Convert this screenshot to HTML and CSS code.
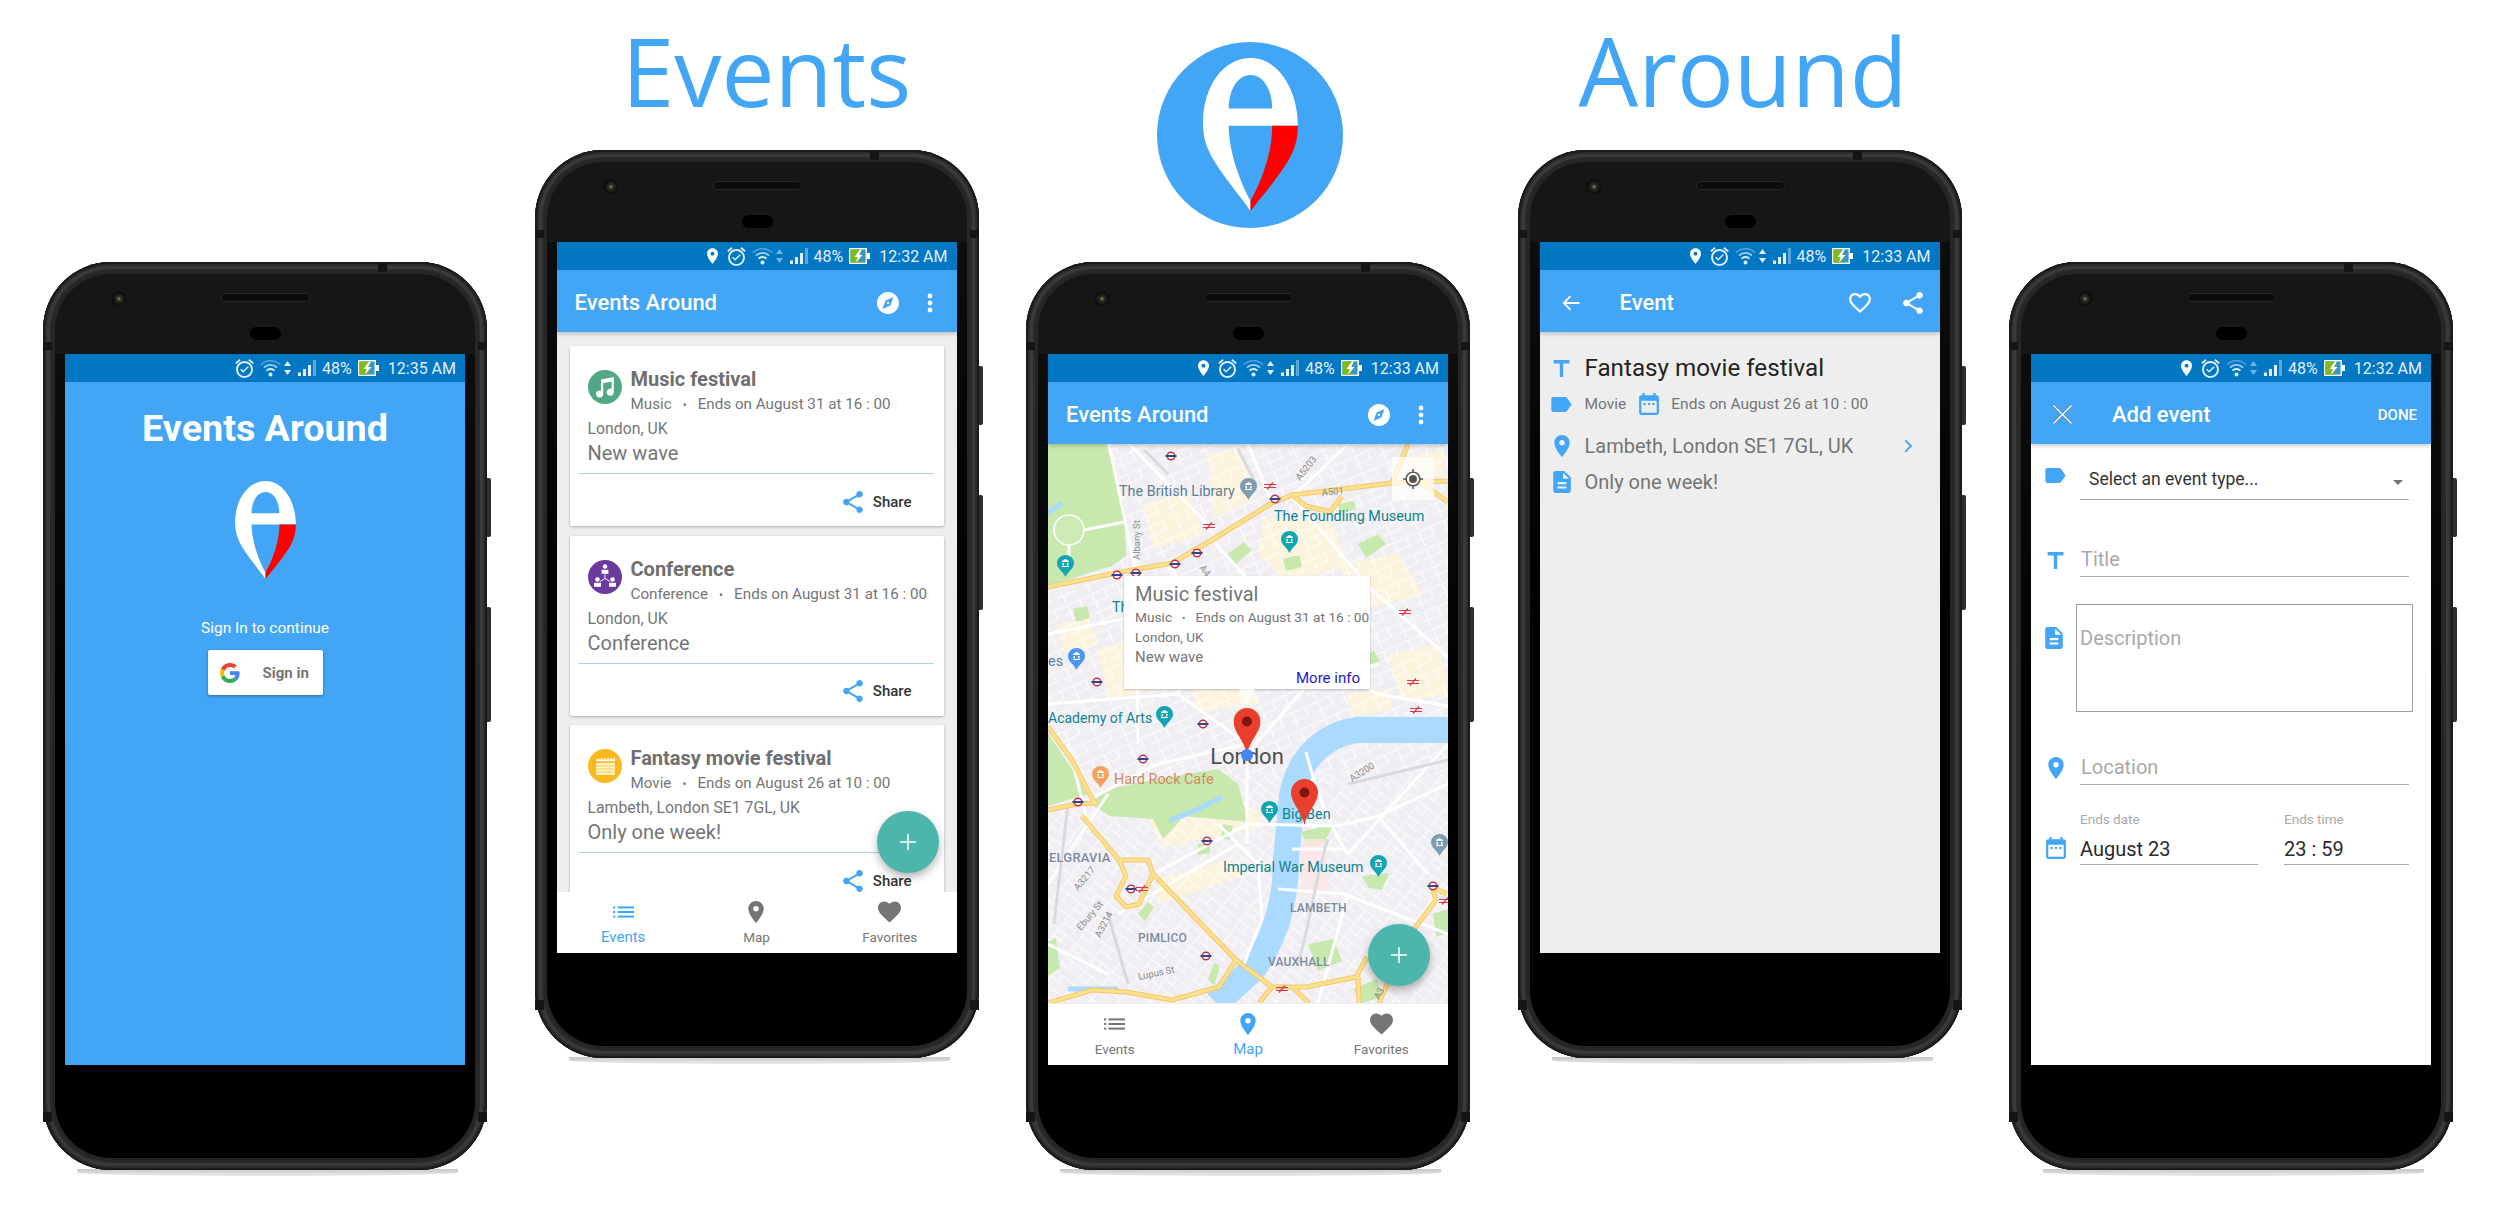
FILE: index.html
```html
<!DOCTYPE html>
<html lang="en">
<head>
<meta charset="utf-8">
<title>Events Around</title>
<link rel="stylesheet" href="styles.css">
</head>
<body>
<svg class="sprite" aria-hidden="true">
  <defs>
    <symbol id="i-pin" viewBox="5 2 14 20"><path d="M12 2C8.13 2 5 5.13 5 9c0 5.25 7 13 7 13s7-7.75 7-13c0-3.87-3.13-7-7-7zm0 9.5a2.5 2.5 0 1 1 0-5 2.5 2.5 0 0 1 0 5z"/></symbol>
    <symbol id="i-alarm" viewBox="2 1.8 20 20.4"><path d="M7.88 3.39L6.6 1.86 2 5.71l1.29 1.53 4.59-3.85zM22 5.72l-4.6-3.86-1.29 1.53 4.6 3.86L22 5.72zM12 4c-4.97 0-9 4.03-9 9s4.02 9 9 9c4.97 0 9-4.03 9-9s-4.03-9-9-9zm0 16c-3.87 0-7-3.13-7-7s3.13-7 7-7 7 3.13 7 7-3.13 7-7 7zm-1.46-5.47L8.41 12.4l-1.06 1.06 3.18 3.18 6-6-1.06-1.06-4.93 4.95z"/></symbol>
    <symbol id="i-wifi" viewBox="0 0 21 17"><circle cx="10.5" cy="14.5" r="2"/><path class="st" d="M6.6 10.6a5.5 5.5 0 0 1 7.8 0"/><path class="st" d="M4 7.6a9.2 9.2 0 0 1 13 0" opacity=".75"/><path class="st" d="M1 4.6a13.4 13.4 0 0 1 19 0" opacity=".35"/></symbol>
    <symbol id="i-arrows" viewBox="0 0 7 14"><path d="M3.5 0L7 5H0z"/><path d="M3.5 14L0 9h7z"/></symbol>
    <symbol id="i-arrows-dim" viewBox="0 0 7 14"><path d="M3.5 0L7 5H0z" opacity=".5"/><path d="M3.5 14L0 9h7z" opacity=".5"/></symbol>
    <symbol id="i-signal" viewBox="0 0 18 16"><rect x="0" y="12.5" width="3" height="3.5"/><rect x="5" y="9" width="3" height="7"/><rect x="10" y="5" width="3" height="11"/><rect x="15" y="0" width="3" height="16" opacity=".4"/></symbol>
    <symbol id="i-battery" viewBox="0 0 21 16"><path fill="#fff" d="M0 0h18v5h3v6h-3v5H0zM1.5 1.5v13h15v-13z"/><path fill="#7fbb1c" d="M1.5 1.5h9v13h-9z"/><path fill="#dff2b0" d="M10.5 1.5h6v13h-6z" opacity=".25"/><path fill="#fff" d="M11 1.5L5.5 9h3.2L7 14.5 13.5 7h-3.4L12.8 1.5z"/></symbol>
    <symbol id="i-compass" viewBox="2 2 20 20"><path fill-rule="evenodd" d="M12 2C6.48 2 2 6.48 2 12s4.48 10 10 10 10-4.48 10-10S17.52 2 12 2zm2.19 12.19L7 17.4l2.81-7.59L17 6.6l-2.81 7.59zM12 10.9a1.1 1.1 0 1 1 0 2.2 1.1 1.1 0 0 1 0-2.2z"/></symbol>
    <symbol id="i-more" viewBox="0 0 6 20"><circle cx="3" cy="3" r="2.4"/><circle cx="3" cy="10" r="2.4"/><circle cx="3" cy="17" r="2.4"/></symbol>
    <symbol id="i-share" viewBox="3 2 18 20"><path d="M18 16.08c-.76 0-1.44.3-1.96.77L8.91 12.7c.05-.23.09-.46.09-.7s-.04-.47-.09-.7l7.05-4.11c.54.5 1.25.81 2.04.81 1.66 0 3-1.34 3-3s-1.34-3-3-3-3 1.34-3 3c0 .24.04.47.09.7L8.04 9.81C7.5 9.31 6.79 9 6 9c-1.66 0-3 1.34-3 3s1.34 3 3 3c.79 0 1.5-.31 2.04-.81l7.12 4.16c-.05.21-.08.43-.08.65 0 1.61 1.31 2.92 2.92 2.92 1.61 0 2.92-1.31 2.92-2.92s-1.31-2.92-2.92-2.92z"/></symbol>
    <symbol id="i-list" viewBox="0 0 21 12"><circle cx="1.2" cy="1.4" r="1.2"/><circle cx="1.2" cy="6" r="1.2"/><circle cx="1.2" cy="10.6" r="1.2"/><rect x="4.5" y="0.4" width="16.5" height="2"/><rect x="4.5" y="5" width="16.5" height="2"/><rect x="4.5" y="9.6" width="16.5" height="2"/></symbol>
    <symbol id="i-heart" viewBox="2 3 20 18.35"><path d="M12 21.35l-1.45-1.32C5.4 15.36 2 12.28 2 8.5 2 5.42 4.42 3 7.5 3c1.74 0 3.41.81 4.5 2.09C13.09 3.81 14.76 3 16.5 3 19.58 3 22 5.42 22 8.5c0 3.78-3.4 6.86-8.55 11.54L12 21.35z"/></symbol>
    <symbol id="i-heart-o" viewBox="2 3 20 18.35"><path d="M16.5 3c-1.74 0-3.41.81-4.5 2.09C10.91 3.81 9.24 3 7.5 3 4.42 3 2 5.42 2 8.5c0 3.78 3.4 6.86 8.55 11.54L12 21.35l1.45-1.32C18.6 15.36 22 12.28 22 8.5 22 5.42 19.58 3 16.5 3zm-4.4 15.55l-.1.1-.1-.1C7.14 14.24 4 11.39 4 8.5 4 6.5 5.5 5 7.5 5c1.54 0 3.04.99 3.57 2.36h1.87C13.46 5.99 14.96 5 16.5 5c2 0 3.5 1.5 3.5 3.5 0 2.89-3.14 5.74-7.9 10.05z"/></symbol>
    <symbol id="i-back" viewBox="0 0 18 16"><path class="st" d="M17.5 8H2M8.5 1.2L1.7 8l6.8 6.8"/></symbol>
    <symbol id="i-close" viewBox="0 0 21 21"><path class="st-shadow" d="M1.5 1.5l18 18M19.5 1.5l-18 18"/><path class="st-thin" d="M1.5 1.5l18 18M19.5 1.5l-18 18"/></symbol>
    <symbol id="i-title" viewBox="5 4 14 15"><path d="M5 4v3h5.5v12h3V7H19V4z"/></symbol>
    <symbol id="i-tag" viewBox="3 5 19 14"><path d="M17.63 5.84C17.27 5.33 16.67 5 16 5L5 5.01C3.9 5.01 3 5.9 3 7v10c0 1.1.9 1.99 2 1.99L16 19c.67 0 1.27-.33 1.63-.84L22 12l-4.37-6.16z"/></symbol>
    <symbol id="i-cal" viewBox="3 2 18 20"><path d="M9 11H7v2h2v-2zm4 0h-2v2h2v-2zm4 0h-2v2h2v-2zm2-7h-1V2h-2v2H8V2H6v2H5c-1.11 0-1.99.9-1.99 2L3 20c0 1.1.89 2 2 2h14c1.1 0 2-.9 2-2V6c0-1.1-.9-2-2-2zm0 16H5V9h14v11z"/></symbol>
    <symbol id="i-doc" viewBox="4 2 16 20"><path d="M14 2H6c-1.1 0-1.99.9-1.99 2L4 20c0 1.1.89 2 1.99 2H18c1.1 0 2-.9 2-2V8l-6-6zm2 16H8v-2h8v2zm0-4H8v-2h8v2zm-3-5V3.5L18.5 9H13z"/></symbol>
    <symbol id="i-chev" viewBox="0 0 9 14"><path class="st" d="M1.2 1.2L7 7l-5.8 5.8"/></symbol>
    <symbol id="i-plus" viewBox="0 0 16 16"><path d="M7.2 0h1.6v7.2H16v1.6H8.800V16H7.200V8.800H0V7.200h7.200z"/></symbol>
    <symbol id="i-music" viewBox="0 0 34 34"><circle cx="17" cy="17" r="17" fill="#52a883"/><path fill="#fff" d="M13 9.500v11.200a3.600 3.600 0 1 0 2.200 3.300V13.300l8.400-1.700v7.300a3.600 3.600 0 1 0 2.200 3.300V7z"/></symbol>
    <symbol id="i-conf" viewBox="0 0 34 34"><circle cx="17" cy="17" r="17" fill="#6a3a9c"/><g fill="#fff"><circle cx="17" cy="6.500" r="2.300"/><path d="M13.600 9.800h6.800v4h-6.800z"/><circle cx="9.500" cy="19.500" r="2.300"/><path d="M6 22.800h7v4H6z"/><circle cx="24.500" cy="19.500" r="2.300"/><path d="M21 22.800h7v4h-7z"/></g><path d="M17 14v4.500M17 18.500l-5 3M17 18.500l5 3" stroke="#fff" stroke-width=".9" fill="none"/></symbol>
    <symbol id="i-movie" viewBox="0 0 34 34"><circle cx="17" cy="17" r="17" fill="#fbb91f"/><path fill="#fff3c4" d="M8 14h19v12H8z"/><path fill="#fff" d="M8 9.500l19-.500v3.500H8z"/><path stroke="#fbb91f" stroke-width="1.400" stroke-dasharray="1.600 1.600" d="M8 9.800h19M8 13h19"/><path stroke="#fbc94f" stroke-width=".9" d="M8 17h19M8 20h19M8 23h19"/></symbol>
    <symbol id="i-g" viewBox="0 0 48 48"><path fill="#EA4335" d="M24 9.500c3.540 0 6.710 1.220 9.210 3.600l6.850-6.850C35.900 2.380 30.470 0 24 0 14.620 0 6.510 5.380 2.560 13.220l7.980 6.190C12.430 13.720 17.740 9.500 24 9.500z"/><path fill="#4285F4" d="M46.980 24.550c0-1.570-.15-3.090-.38-4.550H24v9.020h12.940c-.58 2.960-2.260 5.480-4.780 7.180l7.730 6c4.510-4.180 7.090-10.360 7.090-17.650z"/><path fill="#FBBC05" d="M10.530 28.590c-.48-1.450-.76-2.990-.76-4.590s.27-3.140.76-4.590l-7.980-6.190C.92 16.460 0 20.120 0 24c0 3.880.92 7.540 2.560 10.780l7.970-6.190z"/><path fill="#34A853" d="M24 48c6.480 0 11.930-2.130 15.890-5.810l-7.730-6c-2.150 1.450-4.920 2.300-8.160 2.300-6.260 0-11.570-4.220-13.470-9.910l-7.980 6.190C6.510 42.620 14.620 48 24 48z"/></symbol>
    <symbol id="i-logo" viewBox="548 117 284 458"><path fill="#fff" fill-rule="evenodd" d="M690 117C775 117 832 215 832 320H625C625 400 660 490 690 545V575C640 505 590 450 565 395 552 365 548 340 548 310 548 200 610 117 690 117ZM625 268H755C755 215 730 168 690 168 650 168 625 215 625 268Z"/><path fill="#f00" d="M755 320H832C832 370 815 410 790 445 760 490 725 530 690 575V545C725 480 755 400 755 320Z"/></symbol>
    <symbol id="m-ug" viewBox="0 0 12 10"><circle cx="6" cy="5" r="3.800" fill="#fff" stroke="#c0344a" stroke-width="1.500"/><rect x="0.500" y="4" width="11" height="2" fill="#34418f"/></symbol>
    <symbol id="m-rail" viewBox="0 0 12 8"><path d="M0 2.500h12M0 5.500h12M3 7.500l6-7" stroke="#d6394a" stroke-width="1.200" fill="none"/></symbol>
    <symbol id="m-poi" viewBox="0 0 17 22"><path d="M8.500 22C6 16.500 0 13.500 0 8a8.500 8 0 0 1 17 0c0 5.500-6 8.500-8.500 14z"/><path d="M5 6l3.500-2L12 6v1H5zM5.500 8h1.500v2.500h-1.500zM10 8h1.500v2.500H10zM5 11h7v1H5z" fill="#fff"/></symbol>
    <symbol id="m-marker" viewBox="0 0 27 46"><path fill="#ea3f2c" d="M13.500 46C11 33 0 24 0 13.500a13.500 13.500 0 0 1 27 0C27 24 16 33 13.500 46z"/><circle cx="13.500" cy="13.500" r="5" fill="#7d1710"/></symbol>
    <pattern id="streets-a" width="27" height="19" patternUnits="userSpaceOnUse" patternTransform="rotate(-24)"><path d="M0 3h27M6 3v16M19 3v9M0 12h20" stroke="#fff" stroke-width="1.200" fill="none"/></pattern>
    <pattern id="streets-b" width="23" height="17" patternUnits="userSpaceOnUse" patternTransform="rotate(38)"><path d="M0 2h23M8 2v15M17 2v8M8 10h15" stroke="#fff" stroke-width="1" fill="none"/></pattern>
    <path id="yellow-roads" d="M0 143L68 129 124 119 164 96 224 59 244 51 344 39 400 37M360 0L344 39M372 38L400 58M244 51L258 62 282 68 294 52M0 283L24 316 41 349 48 361M0 366L28 360 48 359M34 372L71 416 100 416 105 430 91 460 78 463 68 452 78 432 71 416M105 430L188 516 224 543 258 543 308 533 319 513M0 559L44 546 78 548 124 556 171 543 188 516M224 543L211 559M244 543L261 559M310 533L311 559M384 443L388 456 358 496 331 559M384 443L399 450"/>
    <clipPath id="map-clip"><rect width="400" height="559"/></clipPath>
  </defs>
</svg>

<main class="stage">

  <section class="col col-low">
    <article class="phone">
      <span class="camera"></span><span class="speaker"></span><span class="sensor"></span>
      <span class="btn btn-power"></span><span class="btn btn-volume"></span>
      <div class="bezel">
        <div class="screen screen-blue">
          <div class="status">
            <svg class="s-alarm"><use href="#i-alarm"/></svg>
            <svg class="s-wifi"><use href="#i-wifi"/></svg>
            <svg class="s-arrows"><use href="#i-arrows"/></svg>
            <svg class="s-signal"><use href="#i-signal"/></svg>
            <span class="s-pct">48%</span>
            <svg class="s-batt"><use href="#i-battery"/></svg>
            <span class="s-time">12:35 AM</span>
          </div>
          <div class="splash">
            <h2 class="splash-title">Events Around</h2>
            <svg class="splash-logo"><use href="#i-logo"/></svg>
            <p class="splash-text">Sign In to continue</p>
            <div class="gbtn">
              <svg class="gbtn-icon"><use href="#i-g"/></svg>
              <span class="gbtn-label">Sign in</span>
            </div>
          </div>
        </div>
      </div>
    </article>
    <div class="floor"></div>
  </section>

  <section class="col col-high">
    <h1 class="hero hero-events">Events</h1>
    <article class="phone">
      <span class="camera"></span><span class="speaker"></span><span class="sensor"></span>
      <span class="btn btn-power"></span><span class="btn btn-volume"></span>
      <div class="bezel">
        <div class="screen">
          <div class="status">
            <svg class="s-pin"><use href="#i-pin"/></svg>
            <svg class="s-alarm"><use href="#i-alarm"/></svg>
            <svg class="s-wifi"><use href="#i-wifi"/></svg>
            <svg class="s-arrows"><use href="#i-arrows-dim"/></svg>
            <svg class="s-signal"><use href="#i-signal"/></svg>
            <span class="s-pct">48%</span>
            <svg class="s-batt"><use href="#i-battery"/></svg>
            <span class="s-time">12:32 AM</span>
          </div>
          <header class="appbar">
            <span class="appbar-title appbar-brand">Events Around</span>
            <svg class="ab-compass"><use href="#i-compass"/></svg>
            <svg class="ab-more"><use href="#i-more"/></svg>
          </header>
          <div class="cards">
            <div class="card">
              <div class="card-head">
                <svg class="avatar"><use href="#i-music"/></svg>
                <div>
                  <div class="card-title">Music festival</div>
                  <div class="card-sub">Music<span class="dot">•</span>Ends on August 31 at 16 : 00</div>
                </div>
              </div>
              <div class="card-loc">London, UK</div>
              <div class="card-desc">New wave</div>
              <div class="card-foot"><svg class="share-icon"><use href="#i-share"/></svg><span class="share-label">Share</span></div>
            </div>
            <div class="card">
              <div class="card-head">
                <svg class="avatar"><use href="#i-conf"/></svg>
                <div>
                  <div class="card-title">Conference</div>
                  <div class="card-sub">Conference<span class="dot">•</span>Ends on August 31 at 16 : 00</div>
                </div>
              </div>
              <div class="card-loc">London, UK</div>
              <div class="card-desc">Conference</div>
              <div class="card-foot"><svg class="share-icon"><use href="#i-share"/></svg><span class="share-label">Share</span></div>
            </div>
            <div class="card">
              <div class="card-head">
                <svg class="avatar"><use href="#i-movie"/></svg>
                <div>
                  <div class="card-title">Fantasy movie festival</div>
                  <div class="card-sub">Movie<span class="dot">•</span>Ends on August 26 at 10 : 00</div>
                </div>
              </div>
              <div class="card-loc">Lambeth, London SE1 7GL, UK</div>
              <div class="card-desc">Only one week!</div>
              <div class="card-foot"><svg class="share-icon"><use href="#i-share"/></svg><span class="share-label">Share</span></div>
            </div>
            <button class="fab fab-list"><svg class="fab-plus"><use href="#i-plus"/></svg></button>
          </div>
          <nav class="tabs">
            <div class="tab tab-on"><svg class="tab-list"><use href="#i-list"/></svg><span class="tab-label">Events</span></div>
            <div class="tab"><svg class="tab-pin"><use href="#i-pin"/></svg><span class="tab-label">Map</span></div>
            <div class="tab"><svg class="tab-heart"><use href="#i-heart"/></svg><span class="tab-label">Favorites</span></div>
          </nav>
        </div>
      </div>
    </article>
    <div class="floor"></div>
  </section>

  <section class="col col-low col-logo">
    <div class="logo-wrap">
      <div class="logo-disc"><svg class="logo-mark"><use href="#i-logo"/></svg></div>
    </div>
    <article class="phone">
      <span class="camera"></span><span class="speaker"></span><span class="sensor"></span>
      <span class="btn btn-power"></span><span class="btn btn-volume"></span>
      <div class="bezel">
        <div class="screen">
          <div class="status">
            <svg class="s-pin"><use href="#i-pin"/></svg>
            <svg class="s-alarm"><use href="#i-alarm"/></svg>
            <svg class="s-wifi"><use href="#i-wifi"/></svg>
            <svg class="s-arrows"><use href="#i-arrows"/></svg>
            <svg class="s-signal"><use href="#i-signal"/></svg>
            <span class="s-pct">48%</span>
            <svg class="s-batt"><use href="#i-battery"/></svg>
            <span class="s-time">12:33 AM</span>
          </div>
          <header class="appbar">
            <span class="appbar-title appbar-brand">Events Around</span>
            <svg class="ab-compass"><use href="#i-compass"/></svg>
            <svg class="ab-more"><use href="#i-more"/></svg>
          </header>
          <div class="map">
            <svg class="map-svg" viewBox="0 0 400 559">
              <g clip-path="url(#map-clip)">
                <rect class="m-land" width="400" height="559"/>
                <path class="m-beige" d="M215 72l70 8 15 40-60 20-30-30zM110 150l60-10 30 45-70 20zM210 170l80-10 30 40-70 30zM50 205l70-15 20 50-80 15zM140 225l60-5 10 40-60 8zM290 120l60-10 25 40-60 15zM340 210l50-10 10 50-45 8zM300 250l40-5 5 20-40 8zM345 15l50-8v25l-48 8zM160 10l35-5 10 50-40 20zM95 60l45-10 15 40-50 15zM100 375l110-12 5 20-100 20zM110 435l70-20 20 15-90 30zM10 180l30-5 10 25-35 10z"/>
                <rect class="m-streets" width="400" height="330" fill="url(#streets-a)"/>
                <rect class="m-streets" y="330" width="400" height="229" fill="url(#streets-b)"/>
                <path class="m-park" d="M0 0H58L76 60 78 112 64 122 0 142zM0 289L40 350 0 362zM42 360L60 345 110 335 170 325 190 340 200 378 135 372 125 385 115 395 105 375 62 372zM314 432L341 429 334 446 321 444zM252 388L286 380 276 398 262 403zM260 500l26-5 8 22-24 10zM0 498l8-4 4 30-12 8zM385 470l15-5v25l-12 2zM305 545l24-10 5 18-20 6zM175 380l10 2-3 14-9-2zM150 400l12 0 0 9-12 2zM90 470l10-12 6 5-9 14zM160 535l6-16 6 3-6 20zM310 100l20-10 8 10-20 14zM290 60l16-3 2 8-16 4zM180 110l16-12 8 8-16 14zM235 115l16-4 3 12-16 4zM25 165l14-3 3 12-14 4zM275 200l18-10 8 12-16 10zM310 215l16-8 6 10-16 8z"/>
                <path class="m-pink" d="M252 395h24l6 50-28 8z"/>
                <path class="m-river" d="M400 286H308C272 292 250 318 244 352L238 416C238 450 230 490 205 525L168 559"/>
                <path class="m-water-sm" d="M121 376C140 372 155 362 174 353"/>
                <path class="m-water-sm" d="M0 69L14 59M20 545H70"/>
                <circle class="m-circle" cx="21" cy="86" r="15"/>
                <g class="m-white-lg">
                  <path d="M61 0L88 129 90 300M81 0L158 79M36 86L76 78M21 101V122M244 53L324 146 400 213M120 160L210 190 330 250 400 262M0 190L125 165M0 260L130 250 199 300M199 300V400M40 356L110 320 199 300M199 310L260 240 330 220M258 308C275 372 290 395 300 410M0 440L60 350M105 430L200 380 290 382 330 372 400 340M300 410L400 300M230 445L296 450 400 490M170 380L210 420 214 475 196 520M330 372L380 430M244 405H298M0 500L60 530M70 470L190 400M300 450L270 559M40 380L20 300M300 0L244 53M200 0L224 59M124 119L145 200 130 250M164 96L240 180"/>
                </g>
                <g class="m-gray-lg">
                  <path d="M96 6L120 30M190 5L208 40M300 340L400 316M280 395C268 430 262 480 250 520M60 470L80 540M20 360L6 480"/>
                </g>
                <use href="#yellow-roads" class="m-road-out"/>
                <use href="#yellow-roads" class="m-road-in"/>

                <text class="ml ml-slate" x="71" y="52">The British Library</text>
                <text class="ml ml-teal" x="226" y="77">The Foundling Museum</text>
                <text class="ml ml-teal" x="64" y="168">Th</text>
                <text class="ml ml-blue" x="0" y="222">es</text>
                <text class="ml ml-teal ml-tight" x="0" y="279">Academy of Arts</text>
                <text class="ml ml-hard" x="66" y="340">Hard Rock Cafe</text>
                <text class="ml ml-teal" x="234" y="375">Big Ben</text>
                <text class="ml ml-teal" x="175" y="428">Imperial War Museum</text>
                <text class="ml-area" x="1" y="418">ELGRAVIA</text>
                <text class="ml-area ml-area-sm" x="242" y="468">LAMBETH</text>
                <text class="ml-area ml-area-sm" x="90" y="498">PIMLICO</text>
                <text class="ml-area ml-area-sm" x="220" y="522">VAUXHALL</text>
                <text class="ml-road" transform="translate(91 536) rotate(-12)">Lupus St</text>
                <text class="ml-road" transform="translate(274 52) rotate(-6)">A501</text>
                <text class="ml-road" transform="translate(252 37) rotate(-52)">A5203</text>
                <text class="ml-road" transform="translate(92 116) rotate(-90)">Albany St</text>
                <text class="ml-road" transform="translate(304 338) rotate(-32)">A3200</text>
                <text class="ml-road" transform="translate(30 447) rotate(-50)">A3217</text>
                <text class="ml-road" transform="translate(33 487) rotate(-50)">Ebury St</text>
                <text class="ml-road" transform="translate(52 494) rotate(-62)">A3214</text>
                <text class="ml-road" transform="translate(331 556) rotate(-60)">A3</text>
                <text class="ml-road" transform="translate(151 124) rotate(52)">A4</text>

                <g>
                  <use href="#m-ug" x="117" y="7" width="12" height="10"/><use href="#m-ug" x="221" y="50" width="12" height="10"/>
                  <use href="#m-ug" x="143" y="104" width="12" height="10"/><use href="#m-ug" x="121" y="115" width="12" height="10"/>
                  <use href="#m-ug" x="82" y="124" width="12" height="10"/><use href="#m-ug" x="63" y="126" width="12" height="10"/>
                  <use href="#m-ug" x="43" y="233" width="12" height="10"/><use href="#m-ug" x="149" y="275" width="12" height="10"/>
                  <use href="#m-ug" x="89" y="310" width="12" height="10"/><use href="#m-ug" x="24" y="353" width="12" height="10"/>
                  <use href="#m-ug" x="153" y="392" width="12" height="10"/><use href="#m-ug" x="77" y="440" width="12" height="10"/>
                  <use href="#m-ug" x="152" y="507" width="12" height="10"/><use href="#m-ug" x="379" y="437" width="12" height="10"/>
                  <use href="#m-rail" x="216" y="38" width="12" height="8"/><use href="#m-rail" x="155" y="78" width="12" height="8"/>
                  <use href="#m-rail" x="351" y="164" width="12" height="8"/><use href="#m-rail" x="359" y="234" width="12" height="8"/>
                  <use href="#m-rail" x="362" y="262" width="12" height="8"/><use href="#m-rail" x="88" y="441" width="12" height="8"/>
                  <use href="#m-rail" x="228" y="541" width="12" height="8"/><use href="#m-rail" x="391" y="453" width="12" height="8"/>
                  <use href="#m-poi" class="p-slate" x="192" y="34" width="17" height="22"/>
                  <use href="#m-poi" class="p-teal" x="233" y="87" width="17" height="22"/>
                  <use href="#m-poi" class="p-teal" x="9" y="111" width="17" height="22"/>
                  <use href="#m-poi" class="p-blue" x="20" y="204" width="17" height="22"/>
                  <use href="#m-poi" class="p-teal" x="108" y="262" width="17" height="22"/>
                  <use href="#m-poi" class="p-orange" x="44" y="322" width="17" height="22"/>
                  <use href="#m-poi" class="p-teal" x="213" y="357" width="17" height="22"/>
                  <use href="#m-poi" class="p-teal" x="322" y="411" width="17" height="22"/>
                  <use href="#m-poi" class="p-slate" x="383" y="390" width="17" height="22"/>
                </g>

                <text class="ml-city" x="199" y="320">London</text>
                <use href="#m-marker" x="185.500" y="264" width="27" height="46"/>
                <circle class="m-here" cx="199" cy="311" r="6"/>
                <use href="#m-marker" x="243" y="335" width="27" height="46"/>
              </g>
            </svg>
            <div class="locate"><svg viewBox="0 0 24 24" class="locate-icon"><circle cx="12" cy="12" r="7.500" fill="none" stroke="#555" stroke-width="1.600"/><circle cx="12" cy="12" r="4.300" fill="#555"/><path d="M12 1v4M12 19v4M1 12h4M19 12h4" stroke="#555" stroke-width="1.600"/></svg></div>
            <div class="bubble">
              <div class="b-title">Music festival</div>
              <div class="b-sub">Music<span class="dot dot-b">•</span>Ends on August 31 at 16 : 00</div>
              <div class="b-loc">London, UK</div>
              <div class="b-desc">New wave</div>
              <div class="b-more">More info</div>
            </div>
            <button class="fab fab-map"><svg class="fab-plus"><use href="#i-plus"/></svg></button>
          </div>
          <nav class="tabs">
            <div class="tab"><svg class="tab-list"><use href="#i-list"/></svg><span class="tab-label">Events</span></div>
            <div class="tab tab-on"><svg class="tab-pin"><use href="#i-pin"/></svg><span class="tab-label">Map</span></div>
            <div class="tab"><svg class="tab-heart"><use href="#i-heart"/></svg><span class="tab-label">Favorites</span></div>
          </nav>
        </div>
      </div>
    </article>
    <div class="floor"></div>
  </section>

  <section class="col col-high">
    <h1 class="hero hero-around">Around</h1>
    <article class="phone">
      <span class="camera"></span><span class="speaker"></span><span class="sensor"></span>
      <span class="btn btn-power"></span><span class="btn btn-volume"></span>
      <div class="bezel">
        <div class="screen screen-gray">
          <div class="status">
            <svg class="s-pin"><use href="#i-pin"/></svg>
            <svg class="s-alarm"><use href="#i-alarm"/></svg>
            <svg class="s-wifi"><use href="#i-wifi"/></svg>
            <svg class="s-arrows"><use href="#i-arrows"/></svg>
            <svg class="s-signal"><use href="#i-signal"/></svg>
            <span class="s-pct">48%</span>
            <svg class="s-batt"><use href="#i-battery"/></svg>
            <span class="s-time">12:33 AM</span>
          </div>
          <header class="appbar">
            <svg class="ab-back"><use href="#i-back"/></svg>
            <span class="appbar-title appbar-page">Event</span>
            <svg class="ab-heart"><use href="#i-heart-o"/></svg>
            <svg class="ab-share"><use href="#i-share"/></svg>
          </header>
          <div class="detail">
            <div class="d-row d-row-title">
              <span class="d-slot"><svg class="ic-title"><use href="#i-title"/></svg></span>
              <span class="d-title">Fantasy movie festival</span>
            </div>
            <div class="d-row d-row-meta">
              <span class="d-slot"><svg class="ic-tag"><use href="#i-tag"/></svg></span>
              <span class="d-meta">Movie</span>
              <svg class="ic-cal ic-cal-d"><use href="#i-cal"/></svg>
              <span class="d-meta">Ends on August 26 at 10 : 00</span>
            </div>
            <div class="d-row d-row-loc">
              <span class="d-slot"><svg class="ic-pin"><use href="#i-pin"/></svg></span>
              <span class="d-text">Lambeth, London SE1 7GL, UK</span>
              <svg class="ic-chev"><use href="#i-chev"/></svg>
            </div>
            <div class="d-row d-row-desc">
              <span class="d-slot"><svg class="ic-doc"><use href="#i-doc"/></svg></span>
              <span class="d-text">Only one week!</span>
            </div>
          </div>
        </div>
      </div>
    </article>
    <div class="floor"></div>
  </section>

  <section class="col col-low">
    <article class="phone">
      <span class="camera"></span><span class="speaker"></span><span class="sensor"></span>
      <span class="btn btn-power"></span><span class="btn btn-volume"></span>
      <div class="bezel">
        <div class="screen screen-white">
          <div class="status">
            <svg class="s-pin"><use href="#i-pin"/></svg>
            <svg class="s-alarm"><use href="#i-alarm"/></svg>
            <svg class="s-wifi"><use href="#i-wifi"/></svg>
            <svg class="s-arrows"><use href="#i-arrows-dim"/></svg>
            <svg class="s-signal"><use href="#i-signal"/></svg>
            <span class="s-pct">48%</span>
            <svg class="s-batt"><use href="#i-battery"/></svg>
            <span class="s-time">12:32 AM</span>
          </div>
          <header class="appbar">
            <svg class="ab-close"><use href="#i-close"/></svg>
            <span class="appbar-title appbar-form">Add event</span>
            <span class="ab-done">DONE</span>
          </header>
          <form class="form">
            <div class="f-row f-type">
              <span class="f-slot"><svg class="ic-tag"><use href="#i-tag"/></svg></span>
              <div class="f-field f-select"><span>Select an event type...</span><span class="caret"></span></div>
            </div>
            <div class="f-row f-title">
              <span class="f-slot"><svg class="ic-title"><use href="#i-title"/></svg></span>
              <div class="f-field f-hint">Title</div>
            </div>
            <div class="f-row f-desc">
              <span class="f-slot f-slot-narrow"><svg class="ic-doc"><use href="#i-doc"/></svg></span>
              <div class="f-area">Description</div>
            </div>
            <div class="f-row f-loc">
              <span class="f-slot"><svg class="ic-pin"><use href="#i-pin"/></svg></span>
              <div class="f-field f-hint">Location</div>
            </div>
            <div class="f-row f-dates">
              <span class="f-slot"><svg class="ic-cal"><use href="#i-cal"/></svg></span>
              <div class="f-date">
                <div class="f-small">Ends date</div>
                <div class="f-value">August 23</div>
              </div>
              <div class="f-date f-time">
                <div class="f-small">Ends time</div>
                <div class="f-value">23 : 59</div>
              </div>
            </div>
          </form>
        </div>
      </div>
    </article>
    <div class="floor"></div>
  </section>

</main>
</body>
</html>
```

FILE: styles.css
```css
* { box-sizing: border-box; }
html, body { margin: 0; padding: 0; background: #fff; }
body { width: 2500px; height: 1214px; overflow: hidden; font-family: Roboto, "Liberation Sans", sans-serif; color: #757575; }
svg { display: block; fill: currentColor; overflow: visible; }
.sprite { position: absolute; width: 0; height: 0; }
.st { fill: none; stroke: currentColor; stroke-width: 1.8; }
.st-thin { fill: none; stroke: #fff; stroke-width: 1.4; }
.st-shadow { fill: none; stroke: #5f7f9c; stroke-width: 2.6; }

.stage { display: flex; gap: 47.5px; padding-left: 43px; }
.col { width: 444px; flex: none; display: flex; flex-direction: column; }
.col-low { padding-top: 262px; }
.col-logo { padding-top: 0; }

.hero { margin: 0; height: 150px; padding-top: 23px; font: 400 94.5px/96px "Open Sans", sans-serif; color: #42a5f5; text-align: center; }
.hero-events { padding-left: 20px; }
.hero-around { padding-left: 7px; }

.logo-wrap { height: 262px; padding-top: 42px; display: flex; justify-content: center; padding-left: 4px; }
.logo-disc { width: 186px; height: 186px; border-radius: 50%; background: #42a5f5; display: flex; justify-content: center; padding-top: 16px; }
.logo-mark { width: 95px; height: 153px; }

/* phone frame */
.phone { position: relative; width: 444px; height: 908px; padding: 12px; border-radius: 68px; background: #262626; box-shadow: inset 0 0 0 2px #1a1a1a, inset 0 0 0 4px #2c2c2c, inset 0 0 0 7px #3a3a3a, inset 0 0 0 9px #2a2a2a; }
.phone::after { content: ""; position: absolute; inset: 0; pointer-events: none; background-repeat: no-repeat; background-image: linear-gradient(#151515, #151515), linear-gradient(#151515, #151515), linear-gradient(#151515, #151515), linear-gradient(#151515, #151515), linear-gradient(#151515, #151515); background-size: 9px 10px, 9px 8px, 9px 8px, 9px 10px, 9px 10px; background-position: 335px 0, 0 80px, 435px 80px, 0 850px, 435px 850px; }
.bezel { height: 884px; padding: 80px 10px 93px; border-radius: 56px; background: linear-gradient(#161616 0, #161616 80px, #0d0d0d 80px, #000 480px); }
.camera { position: absolute; left: 68px; top: 28px; width: 16px; height: 16px; border-radius: 50%; background: radial-gradient(circle at 50% 55%, #8a8a3a 0, #2c2c2c 20%, #0c0c0c 55%, #2a2a2a 100%); }
.speaker { position: absolute; left: 178px; top: 31px; width: 89px; height: 9px; border-radius: 5px; background: #0c0c0c; box-shadow: inset 0 0 0 1px #262626; }
.sensor { position: absolute; left: 207px; top: 65px; width: 31px; height: 13px; border-radius: 7px; background: #000; }
.btn { position: absolute; right: -4px; width: 4px; background: #2e2e2e; border-radius: 0 2px 2px 0; }
.btn-power { top: 216px; height: 59px; }
.btn-volume { top: 345px; height: 115px; }
.floor { height: 7px; margin: -1px 29px 0 34px; background: linear-gradient(#c6c6c6, #ececec); border-radius: 0 0 50% 50%; }

.screen { width: 400px; height: 711px; display: flex; flex-direction: column; position: relative; background: #eee; overflow: hidden; }
.screen-blue { background: #42a5f5; }
.screen-gray { background: #eee; }
.screen-white { background: #fff; }

/* status bar */
.status { height: 28px; flex: none; display: flex; align-items: center; justify-content: flex-end; padding-right: 9px; background: #0277c4; color: #e3eff8; }
.status svg { flex: none; }
.s-pin { width: 11px; height: 16px; margin-right: 9px; color: #fff; }
.s-alarm { width: 19px; height: 19px; margin-right: 6px; }
.s-wifi { width: 21px; height: 17px; margin-right: 3px; }
.s-arrows { width: 7px; height: 14px; margin-right: 7px; }
.s-signal { width: 18px; height: 16px; margin-right: 6px; }
.s-pct { font-size: 16px; margin-right: 6px; }
.s-batt { width: 21px; height: 16px; margin-right: 9px; }
.s-time { font-size: 16px; }

/* app bar */
.appbar { height: 62px; flex: none; display: flex; align-items: center; padding-top: 3px; background: #42a5f5; color: #fff; position: relative; z-index: 2; box-shadow: 0 2px 4px rgba(0,0,0,.2); }
.appbar-title { font-size: 22px; font-weight: 500; white-space: nowrap; }
.appbar-brand { margin-left: 18px; margin-right: auto; }
.ab-compass { width: 22px; height: 22px; margin-right: 28px; }
.ab-more { width: 6px; height: 20px; margin-right: 24px; }
.ab-back { width: 18px; height: 16px; margin-left: 22px; }
.appbar-page { margin-left: 40px; margin-right: auto; }
.ab-heart { width: 22px; height: 20px; margin-right: 32px; }
.ab-share { width: 20px; height: 22px; margin-right: 17px; }
.ab-close { width: 21px; height: 21px; margin-left: 21px; }
.appbar-form { margin-left: 39px; margin-right: auto; }
.ab-done { font-size: 15px; font-weight: 500; margin-right: 14px; }

/* event list */
.cards { flex: 1; min-height: 0; position: relative; overflow: hidden; padding: 14px 13px 0; background: #eee; }
.card { height: 180px; margin-bottom: 9.500px; padding: 21px 0 0 18px; background: #fff; border-radius: 2px; box-shadow: 0 1px 3px rgba(0,0,0,.28); }
.card-head { display: flex; gap: 9px; height: 49px; }
.avatar { width: 34px; height: 34px; margin-top: 3px; flex: none; }
.card-title { font-size: 20px; font-weight: 700; line-height: 24px; color: #6f6f6f; white-space: nowrap; }
.card-sub { font-size: 15.200px; line-height: 26px; white-space: nowrap; }
.dot { margin: 0 11px; font-size: 12px; }
.card-loc { font-size: 15.800px; line-height: 25px; }
.card-desc { font-size: 20px; line-height: 25px; }
.card-foot { margin: 7px 0 0 -9px; width: 355px; height: 56px; border-top: 1px solid #a9d3e6; display: flex; align-items: center; justify-content: flex-end; padding-right: 22px; }
.share-icon { width: 20px; height: 22px; color: #42a5f5; margin-right: 10px; }
.share-label { font-size: 15px; font-weight: 500; color: #333; }

.fab { position: absolute; width: 62px; height: 62px; padding: 0; border: 0; border-radius: 50%; background: #4db6ac; color: #fff; display: flex; align-items: center; justify-content: center; box-shadow: 0 4px 8px rgba(0,0,0,.3); z-index: 3; }
.fab-plus { width: 16px; height: 16px; }
.fab-list { right: 18px; bottom: 19px; }
.fab-map { right: 18px; bottom: 18px; }

/* bottom nav */
.tabs { height: 61px; flex: none; display: flex; background: #fff; position: relative; z-index: 2; }
.tab { flex: 1; display: flex; flex-direction: column; align-items: center; color: #757575; }
.tab-on { color: #42a5f5; }
.tab > svg { height: 22px; margin-top: 9px; margin-bottom: 2px; }
.tab-list { width: 21px; }
.tab-pin { width: 16px; }
.tab-heart { width: 23px; }
.tab-label { font-size: 13.500px; line-height: 24px; }
.tab-on .tab-label { font-size: 15px; }

/* splash */
.splash { display: flex; flex-direction: column; align-items: center; color: #fff; }
.splash-title { margin: 22px 0 0; font-size: 37.700px; line-height: 48px; font-weight: 700; white-space: nowrap; }
.splash-logo { width: 61px; height: 98px; margin-top: 29px; }
.splash-text { margin: 37px 0 0; font-size: 15.500px; line-height: 24px; }
.gbtn { width: 115px; height: 45px; margin-top: 10px; background: #fff; border-radius: 2px; box-shadow: 0 1px 3px rgba(0,0,0,.35); display: flex; align-items: center; padding-left: 12px; }
.gbtn-icon { width: 20px; height: 20px; }
.gbtn-label { margin-left: 23px; font-size: 15px; font-weight: 700; color: #757575; }

/* map */
.map { flex: 1; min-height: 0; position: relative; overflow: hidden; }
.map-svg { width: 400px; height: 559px; }
.m-land { fill: #f0eef2; }
.m-beige { fill: #fbf3dc; }
.m-park { fill: #c8e9ad; }
.m-pink { fill: #fae6e6; opacity: .8; }
.m-river { fill: none; stroke: #aadaff; stroke-width: 26; }
.m-water-sm { fill: none; stroke: #aadaff; stroke-width: 5; }
.m-circle { fill: #cdeab5; stroke: #fff; stroke-width: 1.500; }
.m-streets { opacity: .85; }
.m-white-lg path { fill: none; stroke: #fff; stroke-width: 3; }
.m-gray-lg path { fill: none; stroke: #d9dade; stroke-width: 3; }
.m-road-out { fill: none; stroke: #f3c766; stroke-width: 5; stroke-linejoin: round; }
.m-road-in { fill: none; stroke: #fde08d; stroke-width: 3.200; stroke-linejoin: round; }
.ml { font-size: 14.400px; }
.ml-tight { font-size: 14px; }
.ml-slate { fill: #5d7f92; }
.ml-teal { fill: #12828f; }
.ml-blue { fill: #5a80a8; }
.ml-hard { fill: #d18a5e; }
.ml-area { font-size: 13px; font-weight: 500; fill: #7c8aa3; letter-spacing: .2px; }
.ml-area-sm { font-size: 12px; }
.ml-road { font-size: 9.500px; fill: #8a8a8a; }
.ml-city { font-size: 22px; fill: #4f4f4f; text-anchor: middle; }
.m-here { fill: #4285f4; }
.p-teal { color: #12a5b4; }
.p-slate { color: #7f9db0; }
.p-blue { color: #4b96f3; }
.p-orange { color: #f6a15c; }
.locate { position: absolute; left: 344px; top: 13px; width: 42px; height: 43px; background: rgba(255,255,255,.7); display: flex; align-items: center; justify-content: center; }
.locate-icon { width: 22px; height: 22px; }
.bubble { position: absolute; left: 76px; top: 132px; width: 246px; height: 113px; padding: 6px 10px 0 11px; background: #fff; box-shadow: 0 1px 2px rgba(0,0,0,.25); }
.bubble::after { content: ""; position: absolute; left: 115px; top: 113px; border: 8px solid transparent; border-top: 18px solid rgba(255,255,255,.75); border-bottom: 0; }
.b-title { font-size: 20px; line-height: 24px; }
.b-sub { font-size: 13.700px; line-height: 22px; white-space: nowrap; }
.dot-b { margin: 0 10px; font-size: 10px; }
.b-loc { font-size: 13.500px; line-height: 14px; }
.b-desc { font-size: 15px; line-height: 26px; }
.b-more { font-size: 15px; line-height: 16px; text-align: right; color: #1b1bc9; }

/* detail */
.detail { flex: 1; padding-top: 17px; }
.d-row { display: flex; align-items: center; }
.d-slot { width: 45px; flex: none; display: flex; justify-content: center; padding-right: 1px; color: #42a5f5; }
.d-row-title { height: 38px; }
.d-row-meta { height: 34px; }
.d-row-loc { height: 44px; margin-top: 3px; }
.d-row-desc { height: 28px; margin-top: 0; }
.d-title { font-size: 24.200px; color: #242424; white-space: nowrap; }
.d-meta { font-size: 15.500px; white-space: nowrap; }
.d-text { font-size: 20px; white-space: nowrap; }
.ic-title { width: 17px; height: 17px; color: #42a5f5; }
.ic-tag { width: 21px; height: 15px; color: #42a5f5; }
.ic-cal { width: 20px; height: 22px; color: #42a5f5; }
.ic-cal-d { margin: 0 12px 0 13px; }
.ic-pin { width: 16px; height: 22px; color: #42a5f5; }
.ic-doc { width: 18px; height: 22px; color: #42a5f5; }
.ic-chev { width: 9px; height: 14px; color: #42a5f5; margin-left: auto; margin-right: 27px; }

/* form */
.form { flex: 1; }
.f-row { display: flex; }
.f-slot { width: 49px; flex: none; display: flex; justify-content: center; }
.f-slot-narrow { width: 45px; }
.f-field { width: 329px; border-bottom: 1.500px solid #a8a8a8; }
.f-hint { font-size: 20px; color: #a9a9a9; padding-left: 1px; height: 100%; display: flex; align-items: center; }
.f-type { height: 41px; margin-top: 15px; }
.f-type .f-slot { padding-top: 9px; }
.f-select { display: flex; justify-content: space-between; align-items: center; font-size: 17.500px; color: #333; padding: 0 6px 0 9px; height: 41px; }
.caret { width: 0; height: 0; border: 5px solid transparent; border-top: 5px solid #757575; border-bottom: 0; margin-top: 6px; }
.f-title { height: 35px; margin-top: 42px; }
.f-title .f-slot { padding-top: 10px; }
.f-desc { height: 108px; margin-top: 27px; }
.f-desc .f-slot { padding-top: 23px; }
.f-area { width: 337px; height: 108px; border: 1.500px solid #a0a0a0; padding: 21px 0 0 3px; font-size: 20px; line-height: 24px; color: #a9a9a9; }
.f-loc { height: 35px; margin-top: 38px; }
.f-loc .f-slot { padding-top: 7px; }
.f-dates { margin-top: 26px; height: 54px; }
.f-dates .f-slot { padding-top: 26px; }
.f-date { width: 178px; margin-right: 26px; height: 54px; border-bottom: 1.500px solid #a8a8a8; }
.f-time { width: 125px; margin-right: 0; }
.f-small { font-size: 13.500px; line-height: 16px; color: #a9a9a9; }
.f-value { font-size: 20px; line-height: 26px; margin-top: 9px; color: #2a2a2a; }
```
